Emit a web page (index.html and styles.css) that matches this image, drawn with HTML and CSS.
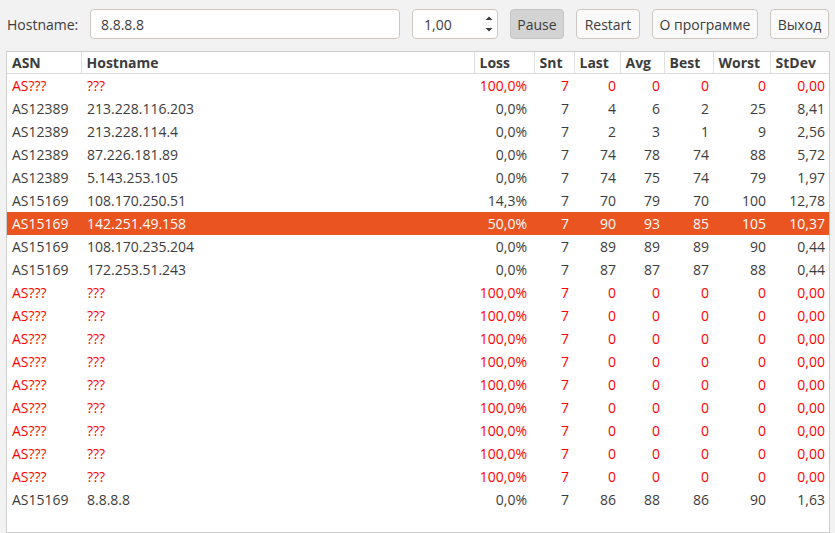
FILE: index.html
```html
<!DOCTYPE html>
<html>
<head>
<meta charset="utf-8">
<link rel="stylesheet" href="styles.css">
</head>
<body>
<div class="toolbar">
  <label class="lbl">Hostname:</label>
  <div class="input host">8.8.8.8</div>
  <div class="input spin"><span>1,00</span>
    <div class="arrows">
      <svg width="8" height="22" viewBox="0 0 8 22"><path d="M0.5 7 L4 3.5 L7.5 7 Z" fill="#3c3c3c"/><path d="M0.5 15 L4 18.5 L7.5 15 Z" fill="#3c3c3c"/></svg>
    </div>
  </div>
  <div class="btn pressed b-pause">Pause</div>
  <div class="btn b-restart">Restart</div>
  <div class="btn b-about">О программе</div>
  <div class="btn b-exit">Выход</div>
</div>
<div class="frame">
<table class="grid">
  <colgroup>
    <col class="c-asn"><col class="c-host"><col class="c-loss"><col class="c-snt"><col class="c-last"><col class="c-avg"><col class="c-best"><col class="c-worst"><col class="c-std">
  </colgroup>
  <thead>
    <tr><th>ASN</th><th>Hostname</th><th>Loss</th><th>Snt</th><th>Last</th><th>Avg</th><th>Best</th><th>Worst</th><th>StDev</th></tr>
  </thead>
  <tbody>
    <tr class="bad"><td>AS???</td><td>???</td><td>100,0%</td><td>7</td><td>0</td><td>0</td><td>0</td><td>0</td><td>0,00</td></tr>
    <tr><td>AS12389</td><td>213.228.116.203</td><td>0,0%</td><td>7</td><td>4</td><td>6</td><td>2</td><td>25</td><td>8,41</td></tr>
    <tr><td>AS12389</td><td>213.228.114.4</td><td>0,0%</td><td>7</td><td>2</td><td>3</td><td>1</td><td>9</td><td>2,56</td></tr>
    <tr><td>AS12389</td><td>87.226.181.89</td><td>0,0%</td><td>7</td><td>74</td><td>78</td><td>74</td><td>88</td><td>5,72</td></tr>
    <tr><td>AS12389</td><td>5.143.253.105</td><td>0,0%</td><td>7</td><td>74</td><td>75</td><td>74</td><td>79</td><td>1,97</td></tr>
    <tr><td>AS15169</td><td>108.170.250.51</td><td>14,3%</td><td>7</td><td>70</td><td>79</td><td>70</td><td>100</td><td>12,78</td></tr>
    <tr class="sel"><td>AS15169</td><td>142.251.49.158</td><td>50,0%</td><td>7</td><td>90</td><td>93</td><td>85</td><td>105</td><td>10,37</td></tr>
    <tr><td>AS15169</td><td>108.170.235.204</td><td>0,0%</td><td>7</td><td>89</td><td>89</td><td>89</td><td>90</td><td>0,44</td></tr>
    <tr><td>AS15169</td><td>172.253.51.243</td><td>0,0%</td><td>7</td><td>87</td><td>87</td><td>87</td><td>88</td><td>0,44</td></tr>
    <tr class="bad"><td>AS???</td><td>???</td><td>100,0%</td><td>7</td><td>0</td><td>0</td><td>0</td><td>0</td><td>0,00</td></tr>
    <tr class="bad"><td>AS???</td><td>???</td><td>100,0%</td><td>7</td><td>0</td><td>0</td><td>0</td><td>0</td><td>0,00</td></tr>
    <tr class="bad"><td>AS???</td><td>???</td><td>100,0%</td><td>7</td><td>0</td><td>0</td><td>0</td><td>0</td><td>0,00</td></tr>
    <tr class="bad"><td>AS???</td><td>???</td><td>100,0%</td><td>7</td><td>0</td><td>0</td><td>0</td><td>0</td><td>0,00</td></tr>
    <tr class="bad"><td>AS???</td><td>???</td><td>100,0%</td><td>7</td><td>0</td><td>0</td><td>0</td><td>0</td><td>0,00</td></tr>
    <tr class="bad"><td>AS???</td><td>???</td><td>100,0%</td><td>7</td><td>0</td><td>0</td><td>0</td><td>0</td><td>0,00</td></tr>
    <tr class="bad"><td>AS???</td><td>???</td><td>100,0%</td><td>7</td><td>0</td><td>0</td><td>0</td><td>0</td><td>0,00</td></tr>
    <tr class="bad"><td>AS???</td><td>???</td><td>100,0%</td><td>7</td><td>0</td><td>0</td><td>0</td><td>0</td><td>0,00</td></tr>
    <tr class="bad"><td>AS???</td><td>???</td><td>100,0%</td><td>7</td><td>0</td><td>0</td><td>0</td><td>0</td><td>0,00</td></tr>
    <tr><td>AS15169</td><td>8.8.8.8</td><td>0,0%</td><td>7</td><td>86</td><td>88</td><td>86</td><td>90</td><td>1,63</td></tr>
  </tbody>
</table>
</div>
</body>
</html>
```
FILE: styles.css
```css
html, body {
  margin: 0;
  padding: 0;
}
body {
  width: 835px;
  height: 533px;
  background: #f2f2f2;
  font-family: "Open Sans", "DejaVu Sans", sans-serif;
  font-size: 14px;
  color: #3c3c3c;
  overflow: hidden;
}
.toolbar {
  display: flex;
  align-items: center;
  height: 30px;
  padding: 9px 6px 0 7px;
  gap: 12px;
}
.lbl {
  width: 71px;
  white-space: nowrap;
}
.input {
  box-sizing: border-box;
  height: 30px;
  background: #fff;
  border: 1px solid #cdc7c2;
  border-radius: 4px;
  display: flex;
  align-items: center;
  padding-left: 10px;
}
.host {
  width: 310px;
}
.spin {
  width: 86px;
  justify-content: space-between;
  padding-right: 4px;
  padding-left: 11px;
}
.arrows {
  display: flex;
  align-items: center;
}
.btn {
  box-sizing: border-box;
  height: 30px;
  background: #fafafa;
  border: 1px solid #cdc7c2;
  border-radius: 4px;
  display: flex;
  align-items: center;
  justify-content: center;
  padding: 0 4px;
  white-space: nowrap;
}
.btn.pressed {
  background: #d3d3d3;
  border-color: #c4c4c4;
}
.b-pause { width: 54px; }
.b-restart { width: 64px; }
.b-about { width: 106px; }
.b-exit { width: 59px; }
.frame {
  box-sizing: border-box;
  margin: 12px 5px 0 6px;
  height: 482px;
  background: #fff;
  border: 1px solid #cdcdcd;
}
.grid {
  border-collapse: collapse;
  table-layout: fixed;
  width: 822px;
}
.c-asn { width: 74px; }
.c-host { width: 393px; }
.c-loss { width: 60px; }
.c-snt { width: 40px; }
.c-last { width: 46px; }
.c-avg { width: 44px; }
.c-best { width: 49px; }
.c-worst { width: 57px; }
.c-std { width: 59px; }
.grid th {
  height: 21px;
  padding: 0 5px;
  font-weight: bold;
  text-align: left;
  color: #3c3c3c;
  border-bottom: 1px solid #dcdcdc;
  border-left: 1px solid #e0e0e0;
  white-space: nowrap;
}
.grid th:first-child {
  border-left: none;
}
.grid td {
  height: 23px;
  padding: 0 4px 0 5px;
  white-space: nowrap;
  text-align: right;
}
.grid td:nth-child(1),
.grid td:nth-child(2) {
  text-align: left;
}
.grid td:nth-child(2) {
  padding-left: 6px;
}
.grid td:nth-child(3) {
  padding-right: 7px;
}
.grid td:nth-child(4) {
  padding-right: 5px;
}
.grid tr.bad td {
  color: #ff0000;
}
.grid tr.sel td {
  background: #e95420;
  color: #ffffff;
}
```
